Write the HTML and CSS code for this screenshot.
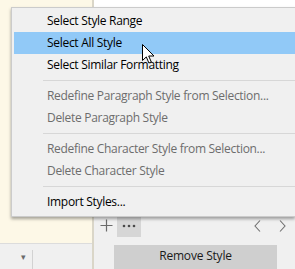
FILE: index.html
```
<!DOCTYPE html>
<html lang="en">
<head>
  <meta charset="UTF-8">
  <title>Styles</title>
  <link rel="stylesheet" href="styles.css">
</head>
<body>

  <div class="app">
    <!-- document side -->
    <div class="doc-col">
      <div class="doc"></div>
      <div class="status">
        <span class="drop">&#9662;</span>
        <span class="status-sep"></span>
      </div>
    </div>

    <!-- styles panel -->
    <div class="panel">
      <div class="style-list"></div>
      <div class="toolbar">
        <span class="tool plus">
          <svg width="13" height="13" viewBox="0 0 13 13"><path d="M6.5 0.5v12M0.5 6.5h12" stroke="#6b6b6b" stroke-width="1.2" fill="none"/></svg>
        </span>
        <span class="tool more">
          <svg width="14" height="4" viewBox="0 0 14 4"><circle cx="2" cy="2" r="1.3" fill="#4a4a4a"/><circle cx="7" cy="2" r="1.3" fill="#4a4a4a"/><circle cx="12" cy="2" r="1.3" fill="#4a4a4a"/></svg>
        </span>
        <span class="spacer"></span>
        <span class="nav">
          <svg width="7" height="12" viewBox="0 0 7 12"><path d="M6 0.5L1 6l5 5.5" stroke="#707070" stroke-width="1.1" fill="none"/></svg>
        </span>
        <span class="nav">
          <svg width="7" height="12" viewBox="0 0 7 12"><path d="M1 0.5L6 6l-5 5.5" stroke="#707070" stroke-width="1.1" fill="none"/></svg>
        </span>
      </div>
      <div class="actions">
        <div class="btn">Remove Style</div>
      </div>
    </div>
  </div>

  <!-- context menu -->
  <div class="menu">
    <div class="item">Select Style Range</div>
    <div class="item active">Select All Style</div>
    <div class="item">Select Similar Formatting</div>
    <div class="sep"></div>
    <div class="item disabled">Redefine Paragraph Style from Selection...</div>
    <div class="item disabled">Delete Paragraph Style</div>
    <div class="sep"></div>
    <div class="item disabled">Redefine Character Style from Selection...</div>
    <div class="item disabled">Delete Character Style</div>
    <div class="sep"></div>
    <div class="item">Import Styles...</div>
  </div>

  <svg class="cursor" width="13" height="20" viewBox="0 0 13 20">
    <path d="M0.5 0.5v16l3.8-3.6 2.6 6.1 2.4-1-2.6-6h5.3z" fill="#fff" stroke="#000" stroke-width="1" stroke-linejoin="miter"/>
  </svg>

</body>
</html>
```

FILE: styles.css
```
body {
  margin: 0;
  font-family: 'Open Sans', sans-serif;
  font-size: 12px;
  background: #f0f0f0;
  overflow: hidden;
}

.app {
  display: grid;
  grid-template-columns: 92px 1fr;
  width: 295px;
  height: 269px;
}

.doc-col {
  display: flex;
  flex-direction: column;
}

.doc {
  flex: 1;
  background: #fdf8e7;
}

.status {
  height: 25px;
  background: #f0f0f0;
  border-top: 1px solid #dcdcdc;
  display: flex;
  align-items: center;
  justify-content: flex-end;
  padding-right: 59px;
}

.drop {
  color: #6a6a6a;
  font-size: 9px;
  margin-right: 6px;
}

.status-sep {
  width: 1px;
  height: 19px;
  margin-top: 6px;
  background: #d2d2d2;
}

.panel {
  display: flex;
  flex-direction: column;
  border-left: 2px solid #dad6c8;
}

.style-list {
  flex: 1;
  background: #fff;
}

.toolbar {
  height: 23px;
  display: flex;
  align-items: center;
  padding-left: 1px;
}

.tool {
  width: 24px;
  height: 23px;
  display: flex;
  align-items: center;
  justify-content: center;
}

.plus {
  width: 22px;
}

.more {
  background: #d6d6d6;
}

.spacer {
  flex: 1;
}

.nav {
  width: 25px;
  display: flex;
  justify-content: center;
}

.actions {
  padding: 8px 18px 0 20px;
}

.btn {
  height: 24px;
  line-height: 22px;
  background: #cfcfcf;
  text-align: center;
  color: #1a1a1a;
  letter-spacing: -0.2px;
}

.menu {
  position: absolute;
  left: 11px;
  right: 0;
  top: 7px;
  background: #f0f0f0;
  border: 1px solid #cbcbcb;
  border-right: none;
  padding: 2px 0 3px 0;
  box-shadow: 0 2px 3px rgba(0, 0, 0, 0.35);
}

.item {
  height: 22px;
  line-height: 22px;
  margin-left: 2px;
  padding-left: 33px;
  color: #000;
  white-space: nowrap;
  letter-spacing: -0.3px;
}

.item.active {
  background: #91c9f7;
}

.item.disabled {
  color: #6d6d6d;
}

.sep {
  height: 1px;
  margin: 4px 0 4px 31px;
  background: #d7d7d7;
}

.cursor {
  position: absolute;
  left: 142px;
  top: 44px;
}
```
